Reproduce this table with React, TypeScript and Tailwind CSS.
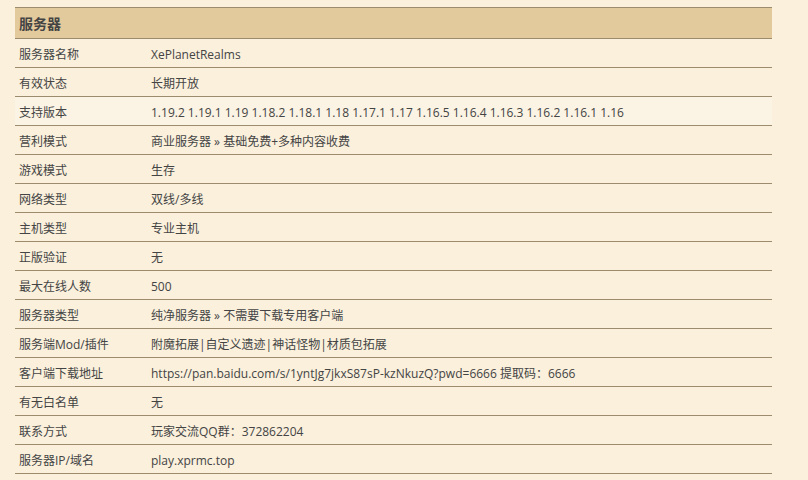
const rows: [string, string][] = [
  ["服务器名称", "XePlanetRealms"],
  ["有效状态", "长期开放"],
  ["支持版本", "1.19.2 1.19.1 1.19 1.18.2 1.18.1 1.18 1.17.1 1.17 1.16.5 1.16.4 1.16.3 1.16.2 1.16.1 1.16"],
  ["营利模式", "商业服务器 » 基础免费+多种内容收费"],
  ["游戏模式", "生存"],
  ["网络类型", "双线/多线"],
  ["主机类型", "专业主机"],
  ["正版验证", "无"],
  ["最大在线人数", "500"],
  ["服务器类型", "纯净服务器 » 不需要下载专用客户端"],
  ["服务端Mod/插件", "附魔拓展|自定义遗迹|神话怪物|材质包拓展"],
  ["客户端下载地址", "https://pan.baidu.com/s/1yntJg7jkxS87sP-kzNkuzQ?pwd=6666 提取码：6666"],
  ["有无白名单", "无"],
  ["联系方式", "玩家交流QQ群：372862204"],
  ["服务器IP/域名", "play.xprmc.top"],
];

export default function App() {
  return (
    <div
      className="min-h-[480px] w-[808px] bg-[#faf0dc] pt-[7px] pl-[15px] text-[#444] text-[12px]"
      style={{ fontFamily: '"Open Sans", "Noto Sans CJK SC", sans-serif' }}
    >
      <div className="w-[757px]">
        {/* Header */}
        <div className="h-[32px] border-y border-[#9c8b6c] bg-[#e3ca9c] flex items-center pl-[4px] pt-[1px]">
          <span className="text-[14px] font-bold text-[#444]">服务器</span>
        </div>
        {rows.map(([label, value], i) => (
          <div
            key={label}
            className={`h-[29px] border-b border-[#9c8b6c] flex items-center pt-[4px] ${i === 2 ? "bg-[#fbf3e3]" : ""}`}
          >
            <div className="w-[136px] pl-[4px] shrink-0">{label}</div>
            <div className="whitespace-nowrap">{value}</div>
          </div>
        ))}
      </div>
    </div>
  );
}
